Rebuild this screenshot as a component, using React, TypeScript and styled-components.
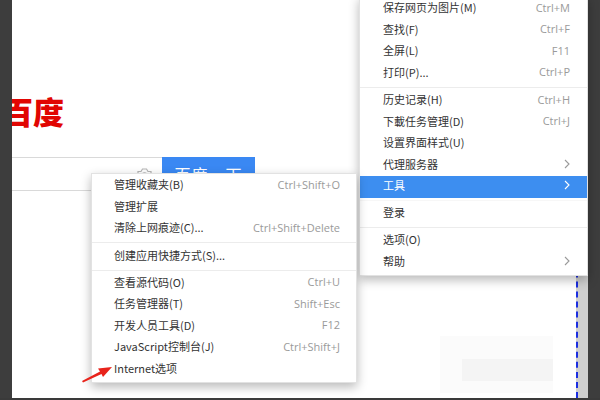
import styled, { createGlobalStyle } from "styled-components";

const Global = createGlobalStyle`
  html, body { margin: 0; padding: 0; }
  body {
    width: 600px;
    height: 400px;
    overflow: hidden;
    font-family: "Noto Sans CJK SC", "Noto Sans", sans-serif;
  }
`;

const Frame = styled.div`
  position: relative;
  width: 600px;
  height: 400px;
  display: flex;
  box-sizing: border-box;
  border-bottom: 2px solid #3a3a3a;
  background: #3c3c3c;
  overflow: hidden;
`;

const Rail = styled.div<{ w: number }>`
  width: ${(p) => p.w}px;
  flex-shrink: 0;
  background: #3d3d3d;
`;

const Page = styled.div`
  flex: 1;
  background: #fff;
  display: flex;
  flex-direction: column;
  overflow: hidden;
  padding-top: 95px;
`;

const Gutter = styled.div`
  width: 10px;
  flex-shrink: 0;
  background: #cfcfcf;
  border-left: 2px dashed #1c2fe0;
`;

const Logo = styled.div`
  margin-left: -10px;
  font-size: 31px;
  line-height: 31px;
  font-weight: 900;
  color: #e10602;
`;

const SearchRow = styled.div`
  margin-top: 31px;
  display: flex;
  height: 34px;
`;

const Input = styled.div`
  width: 160px;
  margin-left: -10px;
  box-sizing: border-box;
  border: 1px solid #d9d9d9;
  border-right: none;
  display: flex;
  align-items: center;
  justify-content: flex-end;
  padding-right: 9px;
`;

const SearchButton = styled.div`
  width: 93px;
  background: #3a88f3;
  color: #fff;
  font-size: 16px;
  display: flex;
  align-items: center;
  justify-content: center;
  letter-spacing: 1px;
`;

const Faint = styled.div`
  margin: 145px 23px 0 auto;
  width: 113px;
  height: 57px;
  background: #fbfbfb;
  display: flex;
  align-items: center;
  justify-content: flex-end;
`;

const FaintInner = styled.div`
  width: 91px;
  height: 22px;
  margin-top: 10px;
  background: #f4f4f4;
`;

const Menu = styled.div<{ left: number; top: number; w: number }>`
  position: absolute;
  left: ${(p) => p.left}px;
  top: ${(p) => p.top}px;
  width: ${(p) => p.w}px;
  background: #fff;
  border: 1px solid #e2e2e2;
  box-sizing: border-box;
  padding: 1px 0 2px;
  box-shadow: 0 4px 10px rgba(0, 0, 0, 0.28);
  font-size: 11px;
`;

const Item = styled.div<{ active?: boolean; pl: number; pr: number }>`
  height: 21.5px;
  box-sizing: border-box;
  display: flex;
  align-items: center;
  justify-content: space-between;
  padding: 0 ${(p) => p.pr}px 3px ${(p) => p.pl}px;
  color: ${(p) => (p.active ? "#fff" : "#333")};
  background: ${(p) => (p.active ? "#3d8ef0" : "transparent")};
  white-space: nowrap;
`;

const Label = styled.span``;

const Key = styled.span`
  color: #9a9a9a;
  font-family: "Open Sans", "Noto Sans", sans-serif;
  font-size: 11px;
`;

const Sep = styled.div<{ h: number; faint?: boolean }>`
  height: ${(p) => p.h}px;
  display: flex;
  align-items: center;
  &::after {
    content: "";
    flex: 1;
    height: 1px;
    background: ${(p) => (p.faint ? "#f7f7f7" : "#ececec")};
  }
`;

const Chevron = ({ color }: { color: string }) => (
  <svg width="6" height="10" viewBox="0 0 6 10">
    <path d="M1 1 L5 5 L1 9" fill="none" stroke={color} strokeWidth="1.1" />
  </svg>
);

const Camera = () => (
  <svg width="17" height="14" viewBox="0 0 17 14">
    <path
      d="M2 4.5 H5 L6.5 2 H10.5 L12 4.5 H15 V12.5 H2 Z"
      fill="none"
      stroke="#b5b5b5"
      strokeWidth="1.2"
    />
    <circle cx="8.5" cy="8.3" r="2.4" fill="none" stroke="#b5b5b5" strokeWidth="1.2" />
  </svg>
);

const Pointer = styled.svg`
  position: absolute;
  left: 78px;
  top: 356px;
`;

type Row = { t: string; k?: string; sub?: boolean; active?: boolean } | { sep: number; faint?: boolean };

const mainRows: Row[] = [
  { t: "保存网页为图片(M)", k: "Ctrl+M" },
  { t: "查找(F)", k: "Ctrl+F" },
  { t: "全屏(L)", k: "F11" },
  { t: "打印(P)...", k: "Ctrl+P" },
  { sep: 6 },
  { t: "历史记录(H)", k: "Ctrl+H" },
  { t: "下載任务管理(D)", k: "Ctrl+J" },
  { t: "设置界面样式(U)" },
  { t: "代理服务器", sub: true },
  { t: "工具", sub: true, active: true },
  { sep: 5, faint: true },
  { t: "登录" },
  { sep: 6 },
  { t: "选项(O)" },
  { t: "帮助", sub: true },
];

const toolRows: Row[] = [
  { t: "管理收藏夹(B)", k: "Ctrl+Shift+O" },
  { t: "管理扩展" },
  { t: "清除上网痕迹(C)...", k: "Ctrl+Shift+Delete" },
  { sep: 6.5 },
  { t: "创建应用快捷方式(S)..." },
  { sep: 5 },
  { t: "查看源代码(O)", k: "Ctrl+U" },
  { t: "任务管理器(T)", k: "Shift+Esc" },
  { t: "开发人员工具(D)", k: "F12" },
  { t: "JavaScript控制台(J)", k: "Ctrl+Shift+J" },
  { t: "Internet选项" },
];

const renderRows = (rows: Row[], pl: number, pr: number) =>
  rows.map((r, i) =>
    "sep" in r ? (
      <Sep key={i} h={r.sep} faint={r.faint} />
    ) : (
      <Item key={i} active={r.active} pl={pl} pr={pr}>
        <Label>{r.t}</Label>
        {r.k && <Key>{r.k}</Key>}
        {r.sub && <Chevron color={r.active ? "#fff" : "#9a9a9a"} />}
      </Item>
    )
  );

export default function App() {
  return (
    <>
      <Global />
      <Frame>
        <Rail w={12} />
        <Page>
          <Logo>百度</Logo>
          <SearchRow>
            <Input>
              <Camera />
            </Input>
            <SearchButton>百度一下</SearchButton>
          </SearchRow>
          <Faint>
            <FaintInner />
          </Faint>
        </Page>
        <Gutter />
        <Rail w={12} />

        <Menu left={359} top={-4} w={229}>
          {renderRows(mainRows, 23, 17)}
        </Menu>
        <Menu left={91} top={173} w={266}>
          {renderRows(toolRows, 22, 16)}
        </Menu>

        <Pointer width="40" height="30" viewBox="0 0 40 30">
          <path d="M4 25 L22 15.5 L20 12.5 L34 11 L25 21 L23.5 18 L5 26.5 Z" fill="#e8231b" />
        </Pointer>
      </Frame>
    </>
  );
}
